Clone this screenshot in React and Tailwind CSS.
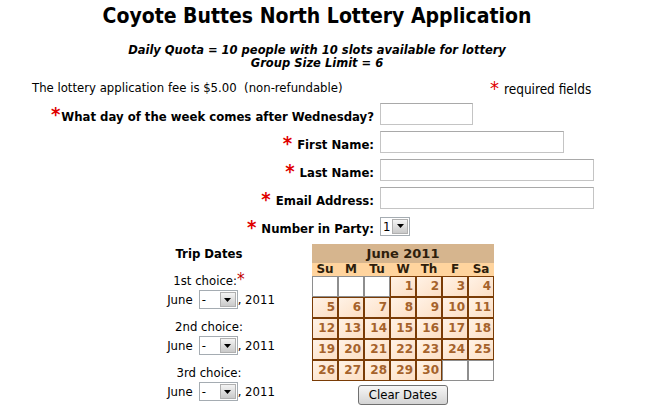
// App.jsx — Coyote Buttes North lottery application form

const RedStar = ({ className = "" }) => (
  <span className={`text-[#e00000] font-bold text-[20px] leading-none ${className}`}>*</span>
);

const TextInput = ({ width }) => (
  <div className={`h-[22px] ${width} border border-[#c4c4c4] border-t-[#a9a9a9] bg-white`} />
);

const FakeSelect = ({ value, width }) => (
  <div
    className={`flex items-stretch h-[19px] ${width} border border-[#a5acb2] bg-white text-[13px] leading-[17px]`}
  >
    <span className="flex-1 pl-[2px] text-black">{value}</span>
    <span className="w-[16px] m-[1px] flex items-center justify-center border border-[#b0b0b0] bg-gradient-to-b from-[#f4f4f4] to-[#c9c9c9]">
      <svg width="7" height="4" viewBox="0 0 7 4">
        <path d="M0 0h7L3.5 4z" fill="#000" />
      </svg>
    </span>
  </div>
);

const FormRow = ({ label, children }) => (
  <>
    <div className="flex items-center justify-end h-[22px] pr-[6px]">
      <RedStar className="mr-[5px] mt-[2px]" />
      <span className="font-bold text-[13px] pt-[5px]">{label}</span>
    </div>
    <div className="flex items-center h-[22px]">{children}</div>
  </>
);

const ChoiceGroup = ({ label, required }) => (
  <div className="flex flex-col items-center">
    <div className="h-[18px] flex items-center text-[13px]">
      {label}
      {required && <span className="text-[#c00000] text-[17px] leading-none self-start -mt-[1px]">*</span>}
    </div>
    <div className="h-[19px] flex items-center text-[13px] pl-[24px]">
      <span className="mr-[6px]">June</span>
      <FakeSelect value="-" width="w-[39px]" />
      <span>, 2011</span>
    </div>
  </div>
);

const days = ["Su", "M", "Tu", "W", "Th", "F", "Sa"];
const cells = [
  null, null, null, 1, 2, 3, 4,
  5, 6, 7, 8, 9, 10, 11,
  12, 13, 14, 15, 16, 17, 18,
  19, 20, 21, 22, 23, 24, 25,
  26, 27, 28, 29, 30, null, null,
];

const Calendar = () => (
  <div className="flex flex-col items-center w-[182px]">
    <div className="w-full bg-[#d6b58e] text-center font-bold text-[13px] leading-[19px] text-[#2e1e0c] font-['DejaVu_Sans',sans-serif]">
      June 2011
    </div>
    <div className="w-full grid grid-cols-7 bg-[#ffd49e] font-bold text-[12px] leading-[13px] text-[#2e1e0c] font-['DejaVu_Sans',sans-serif]">
      {days.map((d) => (
        <div key={d} className="text-center">{d}</div>
      ))}
    </div>
    <div className="w-full grid grid-cols-7 font-['DejaVu_Sans',sans-serif]">
      {cells.map((n, i) =>
        n ? (
          <div
            key={i}
            className="h-[21px] border border-[#7a3c06] bg-gradient-to-br from-[#fff2e6] to-[#fcdfc4] text-right pr-[2px] font-bold text-[12px] leading-[19px] text-[#a5622b]"
          >
            {n}
          </div>
        ) : (
          <div key={i} className="h-[21px] border border-[#8e8e8e] bg-white" />
        )
      )}
    </div>
    <button className="mt-[4px] w-[90px] h-[20px] rounded-[3px] border border-[#707070] bg-gradient-to-b from-[#f6f6f6] to-[#d4d4d4] text-[13px] leading-[18px] text-black">
      Clear Dates
    </button>
  </div>
);

export default function App() {
  return (
    <div className="w-[662px] h-[415px] bg-white text-black font-['DejaVu_Sans_Condensed','Liberation_Sans',sans-serif] overflow-hidden">
      <h1 className="w-[634px] h-[34px] flex items-center justify-center font-bold text-[21px]">
        Coyote Buttes North Lottery Application
      </h1>

      <div className="w-[634px] mt-[10px] text-center italic font-bold text-[11.5px] leading-[13px] font-['DejaVu_Sans',sans-serif]">
        <div>Daily Quota = 10 people with 10 slots available for lottery</div>
        <div>Group Size Limit = 6</div>
      </div>

      <div className="mt-[8px] h-[19px] flex items-center text-[13px]">
        <span className="ml-[32px] w-[458px]">The lottery application fee is $5.00&nbsp; (non-refundable)</span>
        <RedStar className="self-start font-normal" />
        <span className="ml-[5px] pt-[4px] text-[13.5px]">required fields</span>
      </div>

      <div className="mt-[6px] grid grid-cols-[380px_1fr] gap-y-[6px]">
        <div className="flex items-center justify-end h-[22px] pr-[6px]">
          <RedStar className="mr-[1px]" />
          <span className="font-bold text-[13px] pt-[5px]">What day of the week comes after Wednesday?</span>
        </div>
        <div className="flex items-center h-[22px]">
          <TextInput width="w-[93px]" />
        </div>
        <FormRow label="First Name:">
          <TextInput width="w-[184px]" />
        </FormRow>
        <FormRow label="Last Name:">
          <TextInput width="w-[214px]" />
        </FormRow>
        <FormRow label="Email Address:">
          <TextInput width="w-[214px]" />
        </FormRow>
        <FormRow label="Number in Party:">
          <FakeSelect value="1" width="w-[30px]" />
        </FormRow>
      </div>

      <div className="mt-[7px] flex">
        <div className="ml-[139px] w-[140px] flex flex-col items-center">
          <div className="h-[18px] mt-[1px] flex items-center font-bold text-[13px]">Trip Dates</div>
          <div className="mt-[9px] flex flex-col gap-[9px]">
            <ChoiceGroup label="1st choice:" required />
            <ChoiceGroup label="2nd choice:" />
            <ChoiceGroup label="3rd choice:" />
          </div>
        </div>
        <div className="ml-[33px]">
          <Calendar />
        </div>
      </div>
    </div>
  );
}
